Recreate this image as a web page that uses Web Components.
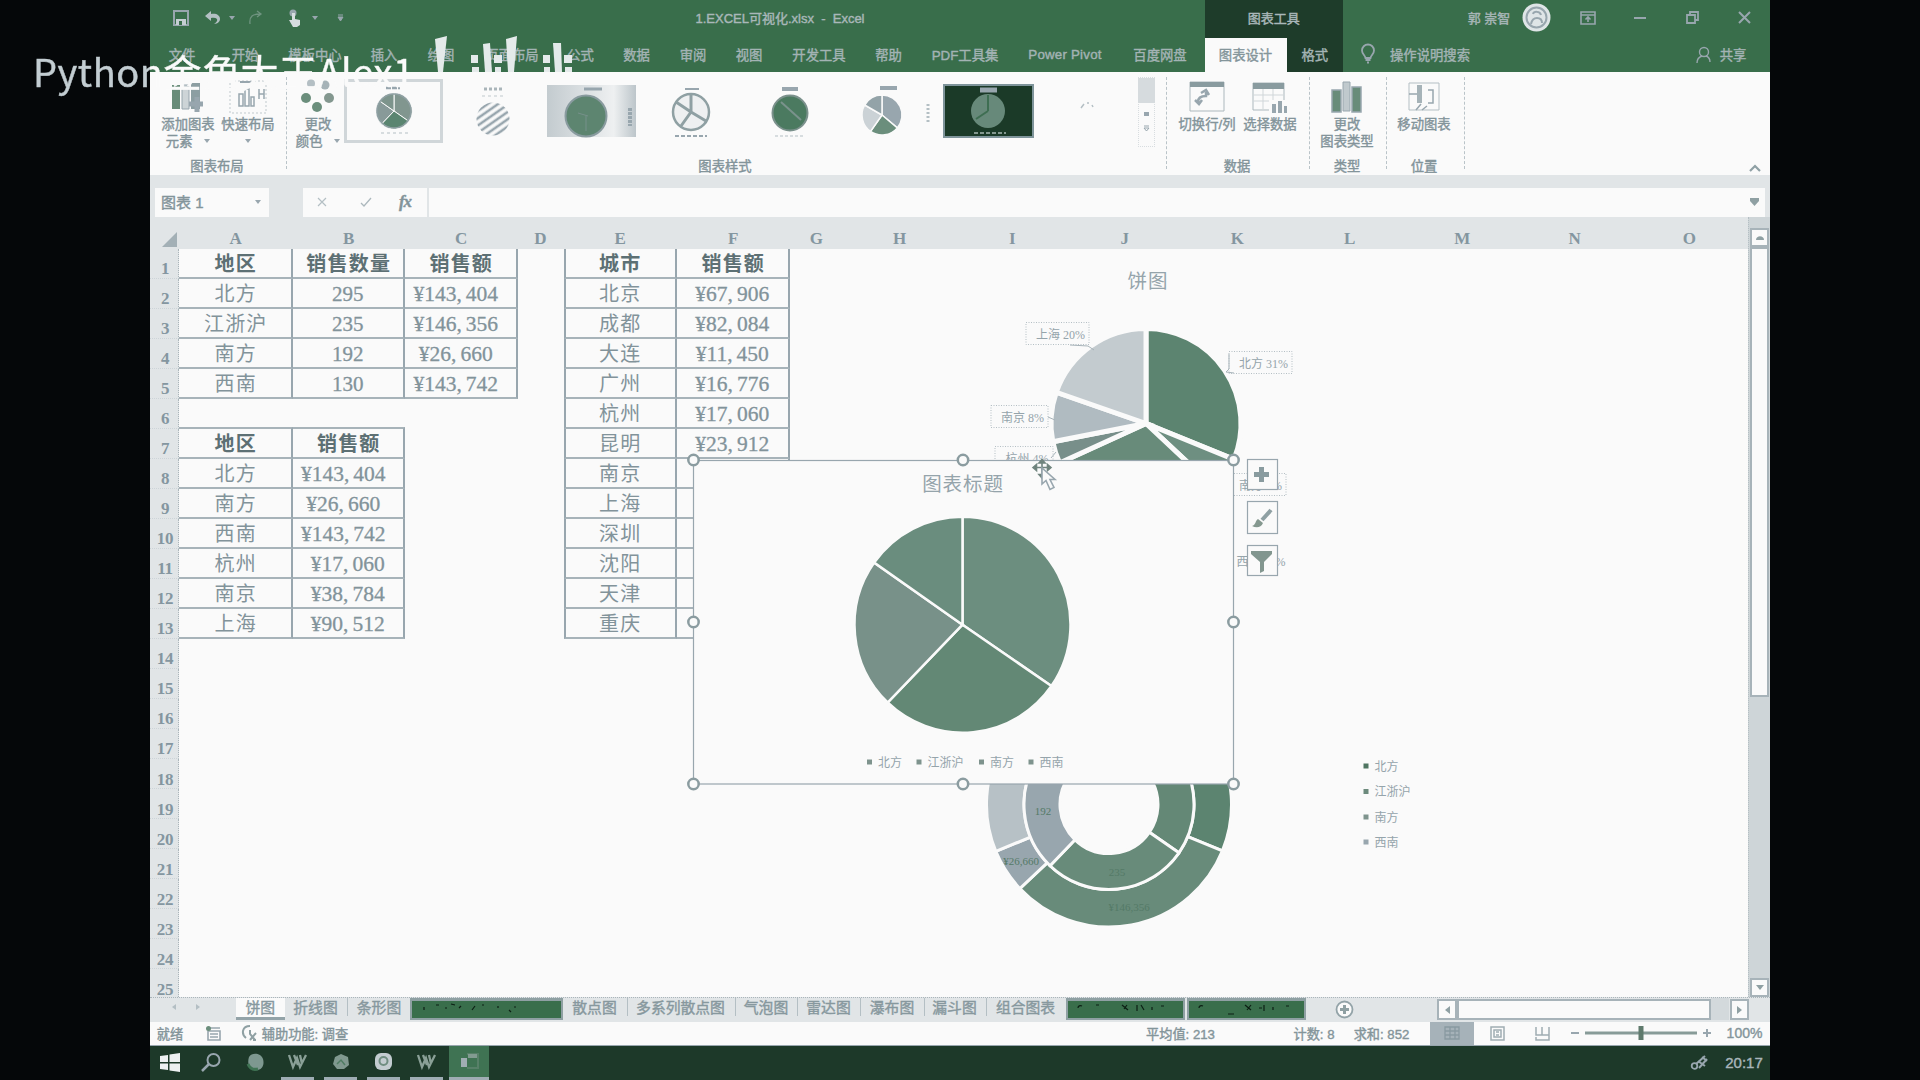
<!DOCTYPE html>
<html lang="zh-CN">
<head>
<meta charset="utf-8">
<title>1.EXCEL可视化.xlsx - Excel</title>
<style>
html,body{margin:0;padding:0;height:1080px;overflow:hidden;background:#050709}
body{font-family:"Liberation Sans","Noto Sans CJK SC",sans-serif}
</style>
</head>
<body>
<excel-desktop></excel-desktop>
<script>
const G='#396e4b', S='#98a6ae', W='#fafafa', BAND='#e1e5e7';
const BASE=':host{display:block;box-sizing:border-box}*{box-sizing:border-box}.row{display:flex;align-items:stretch;-webkit-text-stroke:.4px currentColor}.row>div{flex:none;display:flex;align-items:center;justify-content:center;white-space:pre}svg{display:block;overflow:visible;flex:none}';

// Places items one after another; each item is [left, width, html, class, style].
function run(start, items){
  let pos=start;
  return items.map(function(it){
    const x=it[0], w=it[1], m=x-pos;
    pos=x+w;
    return '<div class="'+(it[3]||'')+'" style="margin-left:'+m.toFixed(1)+'px;width:'+w+'px;'+(it[4]||'')+'">'+it[2]+'</div>';
  }).join('');
}
function mid(c,w,h,cl,st){ return [c-w/2,w,h,cl,st]; }
function svg(w,h,b){ return '<svg width="'+w+'" height="'+h+'" viewBox="0 0 '+w+' '+h+'" fill="none">'+b+'</svg>'; }
const caret=svg(6,4,'<path d="M0 0H6L3 4Z" fill="#98a6ae"/>');

function slice(cx,cy,r0,r1,a0,a1,fill,sw){
  function p(r,a){ const t=(a-90)*Math.PI/180; return (cx+r*Math.cos(t)).toFixed(2)+' '+(cy+r*Math.sin(t)).toFixed(2); }
  const big=a1-a0>180?1:0;
  const arc='A'+r1+' '+r1+' 0 '+big+' 1 '+p(r1,a1);
  const d=r0 ? 'M'+p(r0,a0)+'L'+p(r1,a0)+arc+'L'+p(r0,a1)+'A'+r0+' '+r0+' 0 '+big+' 0 '+p(r0,a0)+'Z'
             : 'M'+cx+' '+cy+'L'+p(r1,a0)+arc+'Z';
  return '<path d="'+d+'" fill="'+fill+'" stroke="'+W+'" stroke-width="'+sw+'"/>';
}
function pie(cx,cy,r0,r1,angles,fills,sw){
  return fills.map(function(f,i){ return slice(cx,cy,r0,r1,angles[i],angles[i+1],f,sw); }).join('');
}
const QTY=[0,124.6,223.9,305.1,360];

function define(name, html){
  customElements.define(name, class extends HTMLElement{
    constructor(){
      super();
      this.attachShadow({mode:'open'}).innerHTML='<style>'+BASE+'</style>'+html;
    }
  });
}
</script>

<script>
/* title row */
define('title-bar', `<style>
:host{height:38px;background:${G};color:#a9b7b9;font-size:13px}
.row{height:38px}
.row>div{padding-bottom:3px}
.ctx{background:#1e3c2a}
</style>
<div class="row">${run(150,[
 mid(181,16,svg(16,16,'<path d="M1 1h14v14H1z" stroke="#98a6ae" stroke-width="2"/><path d="M3 9h10v6H3z" fill="#c4ced2"/><path d="M6 11h3v4H6z" fill="#396e4b"/>')),
 mid(213,18,svg(18,16,'<path d="M7 1L1 6l6 5V8c5-1 7 1 6 3s-3 3-3 3c4 0 6-3 6-5 0-4-4-6-9-5z" fill="#b3c0c3"/>')),
 mid(232,6,caret),
 mid(255,16,svg(16,16,'<path d="M3 14C2 6 6 4 13 4M10 1l4 3-4 3" stroke="#6f9480" stroke-width="1.3"/>')),
 mid(294,14,svg(14,18,'<circle cx="6" cy="4" r="3.5" fill="#98a6ae"/><path d="M5 4h3v6l5 1v5l-3 2H6L2 11h3z" fill="#d6dddf"/>')),
 mid(315,6,caret),
 mid(340,7,svg(7,7,'<path d="M1 1h5M1 3h5L3.5 7z" stroke="#98a6ae" fill="#98a6ae"/>')),
 [695,170,'1.EXCEL可视化.xlsx  -  Excel'],
 [1204.5,138.5,'图表工具','ctx'],
 [1464,50,'郭 崇智'],
 mid(1536,29,svg(29,29,'<circle cx="14.5" cy="14.5" r="14" fill="#dfe5e7"/><circle cx="14.5" cy="14.5" r="10" stroke="#98a6ae" stroke-width="2"/><path d="M9 21c1-5 3-6 6-6s5 2 5 5M11 11c1-3 7-3 8 1" stroke="#98a6ae" stroke-width="2"/>')),
 mid(1588,16,svg(16,14,'<path d="M1 1h14v12H1zM1 4h14M8 11V6M5.5 8.5L8 6l2.5 2.5" stroke="#98a6ae" stroke-width="1.6"/>')),
 mid(1640,12,svg(12,2,'<path d="M0 1h12" stroke="#98a6ae" stroke-width="2"/>')),
 mid(1692,13,svg(13,13,'<path d="M1 4h8v8H1zM4 4V1h8v8H9" stroke="#98a6ae" stroke-width="1.8"/>')),
 mid(1744,13,svg(13,13,'<path d="M1 1l11 11M12 1L1 12" stroke="#98a6ae" stroke-width="2"/>'))
])}</div>`);
</script>

<script>
/* ribbon tabs */
define('ribbon-tabs', `<style>
:host{height:34px;background:${G};color:#a3b3b4;font-size:13.33px}
.row{height:34px}
.row>div{padding-bottom:2px}
.on{background:${W};color:#84959a}
.fmt{background:#1e3c2a}
</style>
<div class="row">${run(150,[
 mid(182,28,'文件'),mid(245,28,'开始'),mid(315,55,'模板中心'),mid(384,28,'插入'),mid(441,28,'绘图'),mid(512,55,'页面布局'),
 mid(580.5,28,'公式'),mid(636.5,28,'数据'),mid(693,28,'审阅'),mid(749,28,'视图'),mid(819,55,'开发工具'),mid(888.5,28,'帮助'),
 mid(965,70,'PDF工具集'),mid(1065,78,'Power Pivot','','letter-spacing:.2px'),mid(1160,55,'百度网盘'),
 [1204.5,82,'图表设计','on'],[1286.5,56.5,'格式','fmt'],
 mid(1368,16,svg(16,20,'<path d="M5.5 14C5 11 2 10 2 6.5a6 6 0 0 1 12 0C14 10 11 11 10.5 14z" stroke="#98a6ae" stroke-width="1.8"/><path d="M5.5 16h5M7 18.5h2" stroke="#98a6ae" stroke-width="2"/>')),
 [1389,82,'操作说明搜索'],
 mid(1704,16,svg(16,17,'<circle cx="8" cy="6" r="4.5" stroke="#98a6ae" stroke-width="1.4"/><path d="M1 17c0-4 2-6 5-7M10 10c3 1 4 3 4 6" stroke="#98a6ae" stroke-width="1.4"/>')),
 [1719,28,'共享']
])}</div>`);
</script>

<script>
/* ribbon panel */
const T3=[0,125,224,305,360];
const icoAdd=svg(34,30,'<path d="M1 3h8v24H1z" fill="#688c79"/><path d="M11 3h7v24h-7z" fill="#cdd4d7" stroke="#98a6ae"/><path d="M20 1h9v26h-9z" fill="#8c9ea2"/><path d="M18 22h14M26 15v15" stroke="#98a6ae" stroke-width="5"/>');
const icoQuick=svg(38,34,'<path d="M1 1h36v32H1z" stroke="#c0c9cd" stroke-dasharray="2 2"/><path d="M11 2h14" stroke="#98a6ae" stroke-width="2"/><path d="M10 14h4v12h-4zM16 9h4v17h-4zM22 17h3v9h-3zM30 9v10M35 9v10M30 14h5" stroke="#98a6ae" stroke-width="1.5"/>');
const icoColors=svg(34,34,'<circle cx="10" cy="3.5" r="4" fill="#b4bfc4"/><circle cx="24" cy="5" r="4.5" fill="#a6b3b8"/><circle cx="5" cy="18" r="5" fill="#6b8e7c"/><circle cx="28" cy="18" r="5" fill="#83978f"/><circle cx="16" cy="27" r="5" fill="#6b8e7c"/>');
const style1=svg(60,54,'<path d="M22 4h14" stroke="#98a6ae" stroke-width="2.5" stroke-dasharray="5 1"/>'+pie(30,27,0,18,T3,['#81968f','#5a8570','#889a99','#7d948c'],1)+'<circle cx="30" cy="27" r="17" stroke="#8fa0a3" stroke-width="1.5"/><path d="M17 49h27" stroke="#b4bfc4" stroke-dasharray="3 3"/>');
const style2=svg(50,54,'<defs><pattern id="h" width="6" height="6" patternUnits="userSpaceOnUse" patternTransform="rotate(-35)"><path d="M0 2h6" stroke="#98a6ae" stroke-width="2.6"/></pattern></defs><path d="M16 3h18" stroke="#aab5ba" stroke-width="3" stroke-dasharray="3 2"/><path d="M14 10h22" stroke="#c0c9cd" stroke-dasharray="3 3"/><circle cx="25" cy="33" r="16.5" fill="url(#h)"/>');
const style3=svg(84,52,'<path d="M34 4h18" stroke="#98a6ae" stroke-width="3"/><circle cx="36" cy="31" r="20.5" fill="#5d8570" stroke="#899b9f" stroke-width="2"/><path d="M28 28l10 3M36 31v15" stroke="#76908a"/><path d="M80 23v18" stroke="#98a6ae" stroke-width="4" stroke-dasharray="3 1"/>');
const style4=svg(44,56,'<path d="M16 4h14" stroke="#98a6ae" stroke-width="2"/><circle cx="22" cy="27" r="18" fill="#eef0f1" stroke="#8fa0a3" stroke-width="2.5"/><path d="M22 27V10M22 27L7 17M22 27l15 9M22 27L12 41" stroke="#8fa0a3" stroke-width="3"/><path d="M6 51h32" stroke="#98a6ae" stroke-dasharray="4 2" stroke-width="2"/>');
const style5=svg(44,56,'<path d="M14 4h16" stroke="#98a6ae" stroke-width="4"/><circle cx="22" cy="28" r="17.5" fill="#4b7a60" stroke="#7b918c" stroke-width="2"/><path d="M13 17l20 18" stroke="#7a928c" stroke-width="2"/><path d="M7 51h30" stroke="#b4bfc4" stroke-dasharray="3 2"/>');
const style6=svg(44,58,'<path d="M20 4h17" stroke="#98a6ae" stroke-width="4"/>'+pie(22,31,0,20,[0,130,215,300,360],['#98a6ae','#6b8e7c','#cbd2d6','#93a3a8'],1.5));
const style7=svg(87,50,'<path d="M35 4h17" stroke="#98a6ae" stroke-width="5"/><circle cx="43" cy="25" r="17" fill="#67897a"/><path d="M43 25V9M43 25l-12 8" stroke="#3e6e52" stroke-width="2"/><path d="M29 47h32" stroke="#83988f" stroke-dasharray="4 2" stroke-width="2"/>');
const icoSwitch=svg(36,31,'<path d="M1 1h34v29H1z" stroke="#acb8bd"/><path d="M1 1h34v5H1z" fill="#899b9f"/><path d="M9 21c0-5 4-6 8-6v-4M12 12l5-3 3 5M6 19l4 4 3-4" stroke="#98a6ae" stroke-width="2.5"/>');
const icoSelect=svg(36,34,'<path d="M1 3h31v27H1z" stroke="#acb8bd"/><path d="M1 3h31v6H1z" fill="#899b9f"/><path d="M1 15h31M1 21h31M11 9v20M21 9v20" stroke="#d0d6d9"/><path d="M17 20h18v14H17z" fill="#fafafa"/><path d="M20 24h4v9h-4zM26 21h4v12h-4zM32 26h3v7h-3z" fill="#98a6ae"/>');
const icoType=svg(30,31,'<path d="M0 9h9v22H0zM20 6h9v25h-9z" fill="#688c79" stroke="#98a6ae" stroke-width="1.5"/><path d="M11 1h7v29h-7z" fill="#c0c9cd" stroke="#98a6ae"/>');
const icoMove=svg(32,29,'<path d="M1 1h30v27H1z" stroke="#b4bfc4"/><path d="M9 3h5v18H9z" fill="#a6b3b8"/><path d="M1 12h8M20 8h5v13h-5M8 28l5-6M14 28l5-4" stroke="#98a6ae" stroke-width="1.5"/>');
function big(icon,lines){
  return '<div class="ic">'+icon+'</div>'+lines.map(function(l){ return '<div class="t">'+l+'</div>'; }).join('');
}
define('ribbon-panel', `<style>
:host{height:103px;background:${W};color:#83949a;font-size:13.33px}
.row{height:103px}
.row>.sep{border-left:1px dashed #b9c3c8;margin-top:5px;height:92px}
.row>.col{flex-direction:column;justify-content:flex-start}
.ic{height:37px;margin-top:6px;display:flex;align-items:center;justify-content:center}
.t{display:flex;align-items:center;gap:8px;height:17px}
.row.labels{height:18px;margin-top:-19px}
.row>.sel{border:3px solid #d0d6d9;height:64px;margin-top:7px}
.row>.dk{background:#1b3a28;border:2px solid #7e949a;height:54px;margin-top:12px}
.row>.gr{background:linear-gradient(90deg,#c3cbcf,#eef0f1 75%,#bcc5ca);height:52px;margin-top:13px}
.row>.pl{height:58px;margin-top:12px}
.row>.sb{height:70px;margin-top:5px;flex-direction:column;border:1px dotted #d8dde0;justify-content:flex-start;gap:9px}
.sb i{display:block;width:17px;height:25px;background:#d6dbde;flex:none}
.row>.end{align-items:flex-end;padding-bottom:3px}
</style>
<div class="row">${run(150,[
 [158,60,big(icoAdd,['添加图表','元素 '+caret]),'col'],
 [218,60,big(icoQuick,['快速布局',caret]),'col'],
 [286,1,'','sep'],
 [292,52,big(icoColors,['更改','颜色 '+caret]),'col'],
 [344,99,style1,'sel'],
 mid(493,50,style2,'pl'),
 [547,89,style3,'gr'],
 mid(690.5,44,style4,'pl'),
 mid(790,44,style5,'pl'),
 mid(882,44,style6,'pl'),
 mid(927,8,svg(8,20,'<path d="M5 1v18" stroke="#b4bfc4" stroke-width="3" stroke-dasharray="2 2"/>'),'pl'),
 [942.5,91,style7,'dk'],
 mid(1087,14,svg(14,8,'<path d="M1 6l3-4M7 1h2M12 3l1 2" stroke="#b4bfc4" stroke-width="1.5"/>'),'','padding-bottom:36px'),
 [1138,17,'<i></i>'+svg(5,4,'<path d="M0 0h5v4H0z" fill="#98a6ae"/>')+svg(5,6,'<path d="M0 1h5M0 3h5L2.5 6z" stroke="#98a6ae"/>'),'sb'],
 [1166,1,'','sep'],
 [1175,64,big(icoSwitch,['切换行/列']),'col'],
 [1241,58,big(icoSelect,['选择数据']),'col'],
 [1309,1,'','sep'],
 [1318,58,big(icoType,['更改','图表类型']),'col'],
 [1385.5,1,'','sep'],
 [1395,58,big(icoMove,['移动图表']),'col'],
 [1463.5,1,'','sep'],
 mid(1755,12,svg(12,8,'<path d="M1 7l5-5 5 5" stroke="#8fa0a5" stroke-width="2.2"/>'),'end')
])}</div>
<div class="row labels">${run(150,[mid(217,56,'图表布局'),mid(725,56,'图表样式'),mid(1237,30,'数据'),mid(1347,30,'类型'),mid(1424,30,'位置')])}</div>`);
</script>

<script>
/* formula bar */
define('formula-bar', `<style>
:host{height:42px;background:${BAND};padding:13px 0 0;color:#83949a}
.row{height:29px}.row>div{padding-bottom:2px}.w{background:${W}}
.row>.name{justify-content:space-between;padding:0 8px 2px 6px;font-size:15px}
.row>.fx{font:italic bold 17px "Liberation Serif",serif;letter-spacing:-1px}
</style>
<div class="row">${run(150,[
 [155,114,'<span>图表 1</span>'+caret,'w name'],
 [303,38,svg(10,10,'<path d="M1 1l8 8M9 1L1 9" stroke="#b4bfc4" stroke-width="1.2"/>'),'w'],
 [341,50,svg(12,10,'<path d="M1 6l3 3 7-8" stroke="#acb8bd" stroke-width="1.3"/>'),'w'],
 [391,36,'fx','w fx','padding-right:8px'],
 [429,1305.5,'','w'],
 [1734.5,30,svg(9,8,'<path d="M0 0h9v3L4.5 8 0 3z" fill="#8fa0a3"/>'),'w','padding-left:10px']
])}</div>`);
</script>

<script>
/* worksheet */
const cols=[29,113.5,112.5,112.5,46,113.5,112.5,53.5,113,112.5,112.5,112.5,112.5,112.5,112.5,116.5];
const T1=[['地区','销售数量','销售额'],['北方','295','¥143,404'],['江浙沪','235','¥146,356'],['南方','192','¥26,660'],['西南','130','¥143,742']];
const T2=[['地区','销售额'],['北方','¥143,404'],['南方','¥26,660'],['西南','¥143,742'],['杭州','¥17,060'],['南京','¥38,784'],['上海','¥90,512']];
const T4=[['城市','销售额'],['北京','¥67,906'],['成都','¥82,084'],['大连','¥11,450'],['广州','¥16,776'],['杭州','¥17,060'],['昆明','¥23,912'],['南京',''],['上海',''],['深圳',''],['沈阳',''],['天津',''],['重庆','']];
function table(t,c0,r0,extra){
  let out='';
  t.forEach(function(r,i){
    r.forEach(function(v,j){
      const cls=['c'];
      if(!i) cls.push('h');
      if(v.indexOf(',')>0) cls.push('n'); else if(Number(v)) cls.push('n','q');
      if(!i && r0===8) cls.push('top');
      if(!j && extra) cls.push(extra);
      if(j && (extra || (r0===8 && i>3))) cls.push('sh');
      out+='<div class="'+cls.join(' ')+'" style="grid-column:'+(c0+j)+';grid-row:'+(r0+i)+'"><span>'+v.replace(',','<b>,</b>')+'</span></div>';
    });
  });
  return out;
}
const heads='ABCDEFGHIJKLMNO'.split('').map(function(l){ return '<div class="ch">'+l+'</div>'; }).join('');
let nums='';
for(let i=1;i<=25;i++) nums+='<div class="rh" style="grid-row:'+(i+1)+'">'+i+'</div>';
define('work-sheet', `<style>
:host{height:780px;overflow:hidden;background:${W};color:#82939a}
.main{display:flex;height:780px}
.grid{display:grid;width:1598px;height:780px;flex:none;overflow:hidden;grid-template-columns:${cols.join('px ')}px;grid-template-rows:32px 29.5px repeat(24,30.04px)}
.ch,.rh{background:${BAND};font:bold 17px/16px "Liberation Serif",serif;display:flex;justify-content:center;align-items:center;color:#8496a0}
.ch{padding-top:11px}
.rh{grid-column:1;padding:11px 0 0 2px;line-height:11px;border-right:1px dotted #aab5ba;border-bottom:1px dotted #cdd4d8;letter-spacing:-.3px}
.c{border-right:2px solid ${S};border-bottom:2px solid #a7b3b9;display:flex;align-items:center;justify-content:center;font-size:20px;letter-spacing:1.2px;font-family:"Noto Sans CJK SC",sans-serif;line-height:26px;padding-left:2px}
.n{font-family:"Liberation Serif",serif;font-size:21.5px;letter-spacing:0;padding:3px 9px 0 0;-webkit-text-stroke:.3px currentColor}
.n b{font-weight:normal;margin-right:4px}
.q{padding-right:0;font-size:21px}
.sh{padding-right:0}
.h{font-weight:bold;color:#5d7074}
.top{border-top:2px solid #a7b3b9;margin-top:-2px}
.dl{border-left:2px solid ${S};padding-left:0}
.vs{flex:none;width:22px;background:#ced5d8;display:flex;flex-direction:column;padding:11px 0 0 1px;border-left:1px dotted #b4bfc4}
.bx{flex:none;width:19px;height:19px;border:2px solid #a7b3b9;background:${W};display:flex;align-items:center;justify-content:center}
.th{width:19px;height:450px;border:2px solid #a7b3b9;background:${W}}
.sp{flex:1}
</style>
<div class="main"><div class="grid">
<div class="ch" style="justify-content:flex-end;padding:12px 2px 0 0">${svg(15,15,'<path d="M15 0v15H0z" fill="#a3b0b6"/>')}</div>
${heads}${nums}${table(T1,2,2)}${table(T2,2,8)}${table(T4,6,2,'dl')}
</div>
<div class="vs"><div class="bx">${svg(8,5,'<path d="M0 5c0-5 8-5 8 0z" fill="#8fa0a3"/>')}</div><div class="th"></div><div class="sp"></div><div class="bx">${svg(8,5,'<path d="M0 0h8L4 5z" fill="#8fa0a3"/>')}</div></div></div>`);
</script>

<script>
/* charts floating over the sheet */
function lbl(x,y,w,t){
  return '<rect x="'+x+'" y="'+y+'" width="'+w+'" height="22" stroke="#b4bfc4" stroke-dasharray="1 1.5"/><text x="'+(x+w/2+3)+'" y="'+(y+16)+'" text-anchor="middle">'+t+'</text>';
}
function mark(x,y,t,c){
  return '<rect x="'+(x-2.5)+'" y="'+(y-2.5)+'" width="5" height="5" fill="'+(c||'#7e938d')+'"/><text x="'+(x+8.5)+'" y="'+(y+4.5)+'">'+t+'</text>';
}
const handles=[[693.5,460],[963,460],[1233.5,460],[693.5,622],[1233.5,622],[693.5,784],[963,784],[1233.5,784]].map(function(p){
  return '<circle cx="'+p[0]+'" cy="'+p[1]+'" r="5.2" fill="#fafafa" stroke="#8b9ca0" stroke-width="2.5"/>';
}).join('');
const art=
 '<text class="t" x="1148" y="288" text-anchor="middle">饼图</text>'
 +pie(1146,423.5,0,95,[0,112.2,133.1,245.5,258.9,289.2,360],['#5c8470','#6e8f81','#688b7a','#788f8a','#b0bbc1','#c3cbcf'],5)
 +'<path d="M1070 345l18 1 6 4M1048 417l7 3M1051 458l5-6M1229 354v15l-3 3M1226 372l8 1" stroke="#a7b3b9"/>'
 +lbl(1026,322.5,63,'上海 20%')+lbl(1229,351.5,63,'北方 31%')+lbl(991,405.5,57,'南京 8%')+lbl(995,446.5,58,'杭州 4%')+lbl(1229,473.5,57,'南方 6%')
 +'<text x="1261" y="566" text-anchor="middle">西南 31%</text>'
 +pie(1109,804.5,85,122.5,[0,112.2,226.7,247.5,360],['#5c8470','#688b7a','#98a6ae','#b7c1c6'],3)
 +pie(1109,804.5,49,85,QTY,['#648876','#688b7a','#98a6ae','#b7c1c6'],3)
 +'<g text-anchor="middle"><text class="v" x="1043" y="815">192</text><text class="v" x="1117" y="876">235</text><text class="v" x="1129" y="911">¥146,356</text><text class="v" x="1021" y="865">¥26,660</text></g>'
 +mark(1366,766,'北方','#4f7561')+mark(1366,791.5,'江浙沪','#6c8a7c')+mark(1366,817,'南方','#7e938d')+mark(1366,842,'西南','#98a6ae')
 +'<rect x="693.5" y="460.5" width="540" height="323.5" fill="#fafafa" stroke="#98a6ae" stroke-width="1.2"/>'
 +'<text class="t" x="963" y="491" text-anchor="middle">图表标题</text>'
 +pie(962.5,624.7,0,108,QTY,['#6c8e7f','#638875','#789189','#6a8d7e'],2.5)
 +mark(869.5,762,'北方')+mark(919,762,'江浙沪')+mark(981.5,762,'南方')+mark(1031,762,'西南')
 +handles
 +'<g fill="#fafafa" stroke="#98a6ae" stroke-width="1.2"><rect x="1247.5" y="459.5" width="30" height="30"/><rect x="1247.5" y="501.5" width="30" height="32"/><rect x="1247.5" y="545.5" width="30" height="30"/></g>'
 +'<path d="M1254 474.5h15M1261.5 467v15" stroke="#899b9f" stroke-width="5"/>'
 +'<path d="M1271 510l-9 10" stroke="#8fa0a3" stroke-width="4"/><path d="M1258 519l5 4c-2 5-7 5-11 3 4-1 3-5 6-7z" fill="#85988f"/>'
 +'<path d="M1251 551h21v3l-8 8v9l-4 2v-11l-9-8z" fill="#82968f"/>'
 +'<path d="M1042 461v15M1034 467.5h16M1042 459.5l-3 3.500h6zM1042 478l-3-3.500h6zM1033 467.5l3.500-3v6zM1051 467.5l-3.500-3v6z" stroke="#71857f" stroke-width="1.6" fill="#4a6358"/>'
 +'<path d="M1042 468v16l4-3.500 4 9 4-2-4-8h5z" fill="#fafafa" stroke="#98a6ae" stroke-width="1.6"/>';
define('chart-layer', `<style>
:host{width:1920px;height:1080px}
text{font-family:"Liberation Serif","Noto Sans CJK SC",serif;font-size:12px;fill:#95a4ab}
.t{font-size:19.5px;letter-spacing:.9px;font-family:"Noto Sans CJK SC",sans-serif}
.v{fill:#547a67;font-size:11px}
</style>`+svg(1920,1080,art));
</script>

<script>
/* sheet tabs */
define('sheet-tabs', `<style>
:host{height:25px;background:${BAND};border-top:1px dotted #aab5ba;color:#87989e;font-size:14.8px}
.row{height:24px;align-items:flex-start}.row>div{height:17px}
.row>div.on{background:${W};height:22px;padding-bottom:2px;border-bottom:3px solid #93a3a8}
.row>div.gn{background:${G};height:22px;border:2px solid #8fa0a3;border-top-width:3px}
.row>div.s{border-left:1px solid #b4bfc4;height:18px}
.row>div.bx{border:2px solid #a7b3b9;background:${W};margin-top:1px;height:21px}
.row>div.tk{background:#d3d9dc;height:22px}
.row>div.add{height:22px}
</style><div class="row">${run(150,[
 mid(174,5,svg(4,6,'<path d="M4 0v6L0 3z" fill="#b4bfc4"/>')),mid(198,5,svg(4,6,'<path d="M0 0v6l4-3z" fill="#b4bfc4"/>')),
 [235.5,49.5,'饼图','on'],mid(315.5,46,'折线图'),[347,1,'','s'],mid(379,46,'条形图'),
 [410,153,svg(146,16,'<path d="M10 5v3M22 3h3M31 6h2M37 2l4 1M45 6l2-2M58 8l3-4M68 3h2M84 4v2M95 8l2 2M100 5h2" stroke="#0c1f14" stroke-width="1.2"/>'),'gn'],
 mid(594.5,46,'散点图'),[627,1,'','s'],mid(680.5,90,'多系列散点图'),[734.5,1,'','s'],mid(766,46,'气泡图'),[797,1,'','s'],mid(828.5,46,'雷达图'),[860,1,'','s'],
 mid(892,46,'瀑布图'),[923.5,1,'','s'],mid(954.5,46,'漏斗图'),[986,1,'','s'],mid(1025.5,60,'组合图表'),
 [1066,119,svg(112,16,'<path d="M8 6c0-2 2-3 4-2M26 3h3M52 3l6 5M57 3l-3 4M67 3v6M71 3l3 5M82 5v3M91 4h3" stroke="#0c1f14" stroke-width="1.2"/>'),'gn'],
 [1187,119,svg(112,16,'<path d="M8 6c0-2 2-3 4-2M37 12h6M54 3l6 5M60 3l-4 5M68 6h3M73 3v6M82 5v3M95 4h3" stroke="#0c1f14" stroke-width="1.2"/>'),'gn'],
 mid(1344,19,svg(19,19,'<circle cx="9.5" cy="9.5" r="8" fill="#fafafa" stroke="#93a3a8" stroke-width="1.8"/><path d="M5 9.5h9M9.5 5v9" stroke="#8fa0a3" stroke-width="3"/>'),'add'),
 [1437,20,svg(5,8,'<path d="M5 0v8L0 4z" fill="#8fa0a3"/>'),'bx'],[1457,254,'','bx'],[1711,18,'','tk'],[1729.5,19,svg(5,8,'<path d="M0 0v8l5-4z" fill="#8fa0a3"/>'),'bx']
])}</div>`);
</script>

<script>
/* status bar */
define('status-bar', `<style>
:host{height:24px;background:${W};border-bottom:1px solid ${S};color:#84959a;font-size:13.2px}
.row{height:23px}.sel{background:#a6b2b9}
.row>div{padding-bottom:1px}
</style><div class="row">${run(150,[
 [156,28,'就绪'],
 mid(213,15,svg(15,15,'<path d="M2 5h12v9H2zM4 8h8M4 11h8M1 2h13" stroke="#98a6ae" stroke-width="1.6"/><circle cx="2.5" cy="2.5" r="2.5" fill="#6b8e7c"/>')),
 mid(249,16,svg(16,16,'<path d="M9 1C1 1 0 9 5 13M9 5v4l5 6M9 15l6-7M12 15h3" stroke="#8fa0a3" stroke-width="2"/>')),
 [261,88,'辅助功能: 调查'],[1144,73,'平均值: 213'],[1292,44,'计数: 8'],[1352,59,'求和: 852'],
 [1430,44,svg(16,14,'<path d="M1 1h14v12H1zM1 5h14M1 9h14M6 1v12M11 1v12" stroke="#899aa1" stroke-width="1.3"/>'),'sel'],
 mid(1497,15,svg(15,15,'<path d="M1 1h13v13H1zM4 4h7v7H4zM6 6h3M6 9h3" stroke="#a0adb3" stroke-width="1.5"/>')),
 mid(1542,15,svg(15,15,'<path d="M1 1v8h6V1M14 1v13H1v-3M7 9h7" stroke="#a0adb3" stroke-width="1.5"/>')),
 mid(1575,8,svg(8,2,'<path d="M0 1h8" stroke="#98a6ae" stroke-width="2"/>')),
 [1585,112,svg(112,14,'<path d="M0 7h112" stroke="#879b98" stroke-width="3"/><path d="M53.5 0h5v14h-5z" fill="#5f7a6d"/>')],
 mid(1707,8,svg(8,8,'<path d="M0 4h8M4 0v8" stroke="#98a6ae" stroke-width="2"/>')),
 [1725,39,'100%','','font-size:14px']
])}</div>`);
</script>

<script>
/* taskbar */
const wps=svg(20,14,'<path d="M1 1l4 12 4-9 3 9 6-12M6 1l4 10M12 1l2 9" stroke="#8aa097" stroke-width="2.3"/>');
define('task-bar', `<style>
:host{height:34px;background:#1d3929;color:#a9b5ba;font-size:15px}
.row{height:34px}.row>div{padding-bottom:2px}.row>.u{border-bottom:3px solid #9fadb4;padding-top:1px}.x{background:#3f7353}
</style><div class="row">${run(150,[
 mid(170,20,svg(20,19,'<path d="M0 3l8-1v7H0zM9.5 1.500L20 0v9H9.500zM0 10.500h8V17l-8-1zM9.500 10.500H20V19L9.500 17.500z" fill="#edf0f1"/>')),
 mid(211,20,svg(20,19,'<circle cx="12.5" cy="7" r="6" stroke="#98a6ae" stroke-width="2"/><path d="M8 11l-7 7" stroke="#98a6ae" stroke-width="2.5"/>')),
 mid(255,17,svg(17,18,'<path d="M2 4c3-5 12-4 14 2 2 7-2 12-8 11C2 17 0 10 2 4z" fill="#7e9890"/><path d="M1 11c2 5 6 6 10 5" stroke="#3f7353" stroke-width="3"/>')),
 [281,33,wps,'u'],
 [324,33,svg(16,15,'<path d="M2 3l6-3 7 3 1 8-5 4H4l-4-5z" fill="#80998f"/><path d="M4 10l4-4 4 5" stroke="#4f7d63" stroke-width="1.5"/>'),'u'],
 [367,33,svg(17,17,'<rect width="17" height="17" rx="6" fill="#c3ccd0"/><circle cx="8.5" cy="8" r="4" stroke="#6f8d80" stroke-width="2"/>'),'u'],
 [410,33,wps,'u'],
 [449,40,svg(18,16,'<path d="M7 1h11v14H7" stroke="#578068" stroke-width="2"/><path d="M8 1h9v4H8z" fill="#829b91"/><path d="M1 5h6v9H1z" fill="#a0adb3"/>'),'u x'],
 [1691,18,svg(18,16,'<circle cx="3.5" cy="12" r="2.8" stroke="#98a6ae" stroke-width="1.8"/><path d="M5 10l9-8M8 14l8-9M7 7l7 5M11 3l5 4" stroke="#98a6ae" stroke-width="2"/>')],
 [1724,40,'20:17']
])}</div>`);
</script>

<script>
/* stream watermark */
define('stream-watermark', `<style>
:host{height:80px}
.wm{display:flex;font:400 38px/60px "Noto Sans CJK SC",sans-serif;white-space:pre;padding-left:33px}
.wm span{width:402px;flex:none;margin-top:5px;letter-spacing:.5px;color:transparent;-webkit-text-stroke:.5px transparent;background:linear-gradient(90deg,#c3cdd2 0 117px,${W} 117px);-webkit-background-clip:text;background-clip:text}
</style><div class="wm"><span>Python金角大王Alex1</span>`+svg(140,36,'<g fill="#e4eaea"><path d="M0 3l12-3-4 36H3z"/><path d="M36 19h7v8h-7zM59 19h8v8h-8zM37 31h7v5h-7zM60 31h6v5h-6z"/><path d="M48 8l7-1 2 29h-7z"/><path d="M71 3l11-3-3 36h-6z"/><path d="M108 19h7v8h-7zM129 19h8v8h-8zM109 31h6v5h-6zM130 31h7v5h-7z"/><path d="M118 7h8l1 29h-7z"/></g>')+'</div>');
</script>

<script>
/* page */
define('excel-desktop', `<style>
:host{width:1920px;height:1080px;background:#050709;display:flex;padding-left:150px;position:relative;overflow:hidden}
main{width:1620px;display:flex;flex-direction:column}
main>*{flex:none}
chart-layer{position:absolute;left:0;top:0}
stream-watermark{position:absolute;left:0;top:36px}
</style>
<main><title-bar></title-bar><ribbon-tabs></ribbon-tabs><ribbon-panel></ribbon-panel><formula-bar></formula-bar>
<work-sheet></work-sheet><sheet-tabs></sheet-tabs><status-bar></status-bar><task-bar></task-bar></main>
<chart-layer></chart-layer><stream-watermark></stream-watermark>`);
</script>
</body>
</html>
